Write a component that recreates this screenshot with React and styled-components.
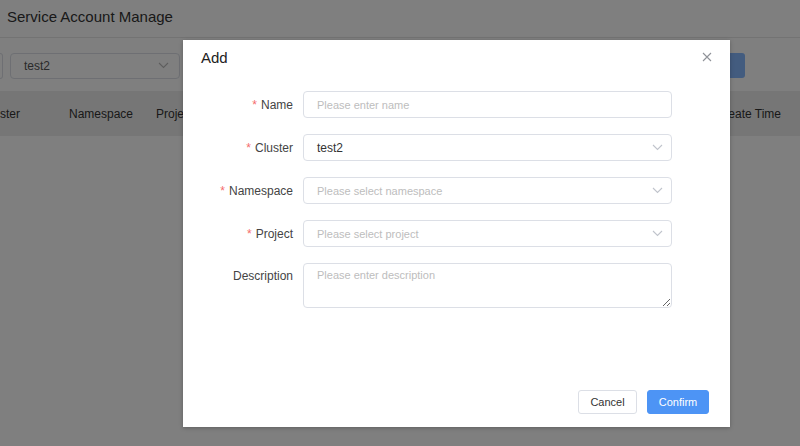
import React from "react";
import styled, { createGlobalStyle } from "styled-components";

const Global = createGlobalStyle`
  html, body { margin: 0; padding: 0; background: #fff; }
  body { font-family: "Liberation Sans", Arial, sans-serif; color: #333; overflow: hidden; }
  * { box-sizing: border-box; }
`;

const Page = styled.div`
  width: 800px;
  height: 446px;
  position: relative;
  overflow: hidden;
  background: #fff;
`;

const Header = styled.div`
  height: 38px;
  display: flex;
  align-items: center;
  padding: 0 0 4px 7px;
  font-size: 15px;
  color: #333;
  border-bottom: 1px solid #e6e6e6;
`;

const Toolbar = styled.div`
  height: 53px;
  display: flex;
  align-items: center;
  gap: 7px;
  padding-top: 2px;
`;

const Stub = styled.div`
  width: 3px;
  height: 26px;
  border: 1px solid #dcdfe6;
  border-left: none;
  border-radius: 0 4px 4px 0;
`;

const BgSelect = styled.div`
  width: 170px;
  height: 26px;
  border: 1px solid #dcdfe6;
  border-radius: 4px;
  display: flex;
  align-items: center;
  justify-content: space-between;
  padding: 0 10px 0 13px;
  font-size: 12px;
  color: #555;
`;

const Spacer = styled.div`
  flex: 1;
`;

const BgButton = styled.div`
  width: 70px;
  height: 25px;
  margin-right: 55px;
  background: #86b8ff;
  border-radius: 3px;
`;

const TableHead = styled.div`
  height: 45px;
  background: #ececec;
  display: flex;
  align-items: center;
  margin-left: -18px;
  font-size: 12px;
  color: #333;
`;

const HeadCell = styled.div`
  width: ${(p) => p.$w}px;
  flex: ${(p) => (p.$grow ? 1 : "none")};
  white-space: nowrap;
  text-align: ${(p) => (p.$right ? "right" : "left")};
  padding-right: ${(p) => (p.$right ? 19 : 0)}px;
`;

const Overlay = styled.div`
  position: absolute;
  inset: 0;
  background: rgba(0, 0, 0, 0.5);
`;

const Modal = styled.div`
  position: absolute;
  left: 183px;
  top: 40px;
  width: 547px;
  height: 387px;
  background: #fff;
  box-shadow: 0 1px 4px rgba(0, 0, 0, 0.25);
  display: flex;
  flex-direction: column;
`;

const ModalHeader = styled.div`
  height: 34px;
  display: flex;
  align-items: center;
  justify-content: space-between;
  padding: 0 16px 0 18px;
`;

const Title = styled.div`
  font-size: 15px;
  color: #222;
  padding-top: 1px;
`;

const Close = styled.button`
  border: none;
  background: none;
  padding: 0;
  width: 14px;
  height: 14px;
  display: flex;
  align-items: center;
  justify-content: center;
  cursor: pointer;
`;

const Form = styled.div`
  flex: 1;
  display: flex;
  flex-direction: column;
  gap: 16px;
  padding: 17px 58px 0 0;
`;

const Row = styled.div`
  display: flex;
  align-items: ${(p) => (p.$top ? "flex-start" : "center")};
`;

const Label = styled.label`
  width: 110px;
  flex: none;
  text-align: right;
  margin-right: 10px;
  font-size: 12px;
  color: #444;
  padding-top: ${(p) => (p.$top ? 6 : 0)}px;
`;

const Star = styled.span`
  color: #f56c6c;
  margin-right: 4px;
`;

const Input = styled.input`
  flex: 1;
  height: 27px;
  border: 1px solid #dcdfe6;
  border-radius: 4px;
  padding: 0 13px;
  font-family: inherit;
  font-size: 11px;
  color: #333;
  outline: none;
  &::placeholder { color: #bdbdbd; }
`;

const Select = styled.div`
  flex: 1;
  height: 27px;
  border: 1px solid #dcdfe6;
  border-radius: 4px;
  padding: 0 8px 0 13px;
  display: flex;
  align-items: center;
  justify-content: space-between;
  font-size: ${(p) => (p.$value ? 12 : 11)}px;
  color: ${(p) => (p.$value ? "#333" : "#bdbdbd")};
`;

const TextArea = styled.textarea`
  flex: 1;
  height: 45px;
  border: 1px solid #dcdfe6;
  border-radius: 4px;
  padding: 5px 13px;
  font-family: inherit;
  font-size: 11px;
  color: #333;
  outline: none;
  resize: vertical;
  &::placeholder { color: #bdbdbd; }
`;

const Footer = styled.div`
  display: flex;
  justify-content: flex-end;
  gap: 10px;
  padding: 0 21px 13px 0;
`;

const Button = styled.button`
  width: ${(p) => (p.$primary ? 62 : 59)}px;
  height: 24px;
  padding: 0;
  border-radius: 3px;
  font-family: inherit;
  font-size: 11px;
  border: 1px solid ${(p) => (p.$primary ? "#4d94f5" : "#dcdfe6")};
  background: ${(p) => (p.$primary ? "#4d94f5" : "#fff")};
  color: ${(p) => (p.$primary ? "#fff" : "#333")};
  cursor: pointer;
`;

const Chevron = ({ color = "#c0c4cc" }) => (
  <svg width="11" height="7" viewBox="0 0 11 7" fill="none">
    <path d="M1 1l4.5 4.5L10 1" stroke={color} strokeWidth="1.1" />
  </svg>
);

const fields = [
  { label: "Name", required: true, type: "input", placeholder: "Please enter name" },
  { label: "Cluster", required: true, type: "select", value: "test2" },
  { label: "Namespace", required: true, type: "select", placeholder: "Please select namespace" },
  { label: "Project", required: true, type: "select", placeholder: "Please select project" },
  { label: "Description", required: false, type: "textarea", placeholder: "Please enter description" },
];

export default function App() {
  return (
    <>
      <Global />
      <Page>
        <Header>Service Account Manage</Header>
        <Toolbar>
          <Stub />
          <BgSelect>
            test2
            <Chevron color="#bbb" />
          </BgSelect>
          <Spacer />
          <BgButton />
        </Toolbar>
        <TableHead>
          <HeadCell $w={87}>Cluster</HeadCell>
          <HeadCell $w={87}>Namespace</HeadCell>
          <HeadCell $w={100}>Project</HeadCell>
          <HeadCell $grow $right>Create Time</HeadCell>
        </TableHead>
        <Overlay />
        <Modal>
          <ModalHeader>
            <Title>Add</Title>
            <Close aria-label="close">
              <svg width="10" height="10" viewBox="0 0 10 10">
                <path d="M1 1l8 8M9 1l-8 8" stroke="#909399" strokeWidth="1.1" />
              </svg>
            </Close>
          </ModalHeader>
          <Form>
            {fields.map((f) => (
              <Row key={f.label} $top={f.type === "textarea"}>
                <Label $top={f.type === "textarea"}>
                  {f.required && <Star>*</Star>}
                  {f.label}
                </Label>
                {f.type === "input" && <Input placeholder={f.placeholder} />}
                {f.type === "select" && (
                  <Select $value={!!f.value}>
                    {f.value || f.placeholder}
                    <Chevron />
                  </Select>
                )}
                {f.type === "textarea" && <TextArea placeholder={f.placeholder} />}
              </Row>
            ))}
          </Form>
          <Footer>
            <Button>Cancel</Button>
            <Button $primary>Confirm</Button>
          </Footer>
        </Modal>
      </Page>
    </>
  );
}
